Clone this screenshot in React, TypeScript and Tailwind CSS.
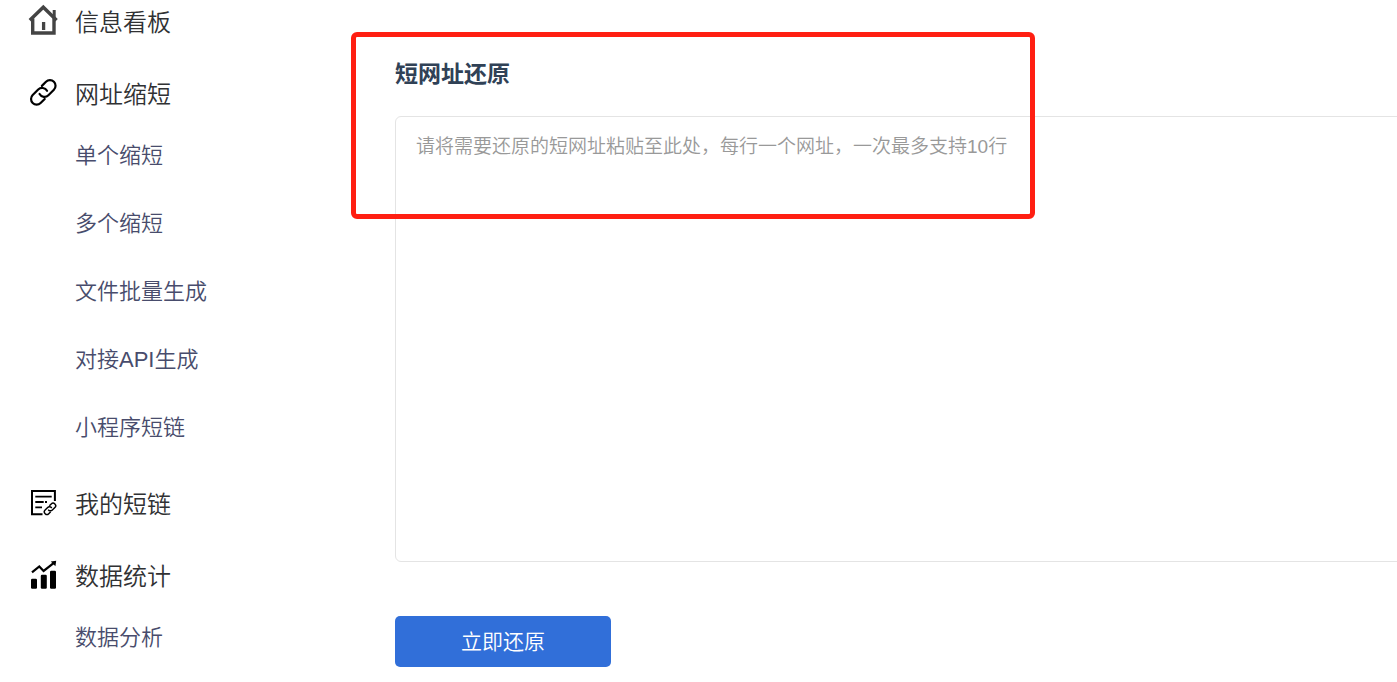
import { ReactNode } from "react";

interface NavGroup {
  title: string;
  icon: ReactNode;
  items?: string[];
}

const iconClass = "mb-1.5 h-[30px] w-[30px] shrink-0 overflow-visible";

function HomeIcon() {
  return (
    <svg viewBox="0 0 30 30" className={`${iconClass} text-[#444444]`} fill="none" stroke="currentColor" strokeWidth="3.4" aria-hidden="true">
      <path d="M1.8 15.3 15.3 2.2 28.6 15.3" />
      <path d="M4.7 13.5V28H26V13.5" />
      <path d="M26.2 5V14" strokeWidth="3" />
      <path d="M15.6 17V25" strokeWidth="3.3" />
    </svg>
  );
}

function ChainPaths() {
  return (
    <>
      <path d="M3.6 -5.6H9.4A5.6 5.6 0 0 1 9.4 5.6H1.6A5.6 5.6 0 0 1 -3.8 -1.5" />
      <path d="M-3.6 5.6H-9.4A5.6 5.6 0 0 1 -9.4 -5.6H-1.6A5.6 5.6 0 0 1 3.8 1.5" />
    </>
  );
}

function ChainIcon() {
  return (
    <svg viewBox="0 0 30 30" className={`${iconClass} text-black`} fill="none" stroke="currentColor" strokeWidth="2.2" strokeLinecap="round" aria-hidden="true">
      <g transform="translate(15.3 15.4) rotate(-45)">
        <ChainPaths />
      </g>
    </svg>
  );
}

function ListIcon() {
  return (
    <svg viewBox="0 0 30 30" className={`${iconClass} text-black`} fill="none" stroke="currentColor" strokeWidth="2" aria-hidden="true">
      <path d="M14.5 27.2H4V4H26.9V14" />
      <path d="M7.3 9.7H23.7M7.3 15H15.7M17 15H19M7.3 20.4H14" strokeWidth="1.8" />
      <g transform="translate(22 21.8) rotate(-45) scale(0.46)">
        <g strokeWidth="3.2">
          <ChainPaths />
        </g>
      </g>
    </svg>
  );
}

function ChartIcon() {
  return (
    <svg viewBox="0 0 30 30" className={`${iconClass} text-black`} fill="currentColor" aria-hidden="true">
      <rect x="3" y="19.7" width="6" height="10" rx="1.2" />
      <rect x="12.8" y="15.7" width="6" height="14" rx="1.2" />
      <rect x="22" y="11.7" width="6" height="18" rx="1.2" />
      <path d="M4 13.4 11.3 7.4 15.6 11.9 25.6 4.1" fill="none" stroke="currentColor" strokeWidth="2.2" />
      <path d="M22.8 2.4 28.2 1.8 27.4 7.2Z" />
    </svg>
  );
}

const groups: NavGroup[] = [
  { title: "信息看板", icon: <HomeIcon /> },
  {
    title: "网址缩短",
    icon: <ChainIcon />,
    items: ["单个缩短", "多个缩短", "文件批量生成", "对接API生成", "小程序短链"],
  },
  { title: "我的短链", icon: <ListIcon /> },
  { title: "数据统计", icon: <ChartIcon />, items: ["数据分析"] },
];

function Sidebar() {
  return (
    <nav className="flex w-[351px] shrink-0 flex-col gap-7 pt-px pl-7">
      {groups.map((group) => (
        <div key={group.title}>
          <a href="#" className="flex h-11 items-center gap-[17px] text-2xl text-[#303133]">
            {group.icon}
            {group.title}
          </a>
          {group.items && (
            <ul className="mt-4 flex flex-col gap-6 pb-1.5 pl-[47px]">
              {group.items.map((item) => (
                <li key={item}>
                  <a href="#" className="flex h-11 items-center text-[22px] text-[#484c6c]">
                    {item}
                  </a>
                </li>
              ))}
            </ul>
          )}
        </div>
      ))}
    </nav>
  );
}

export default function App() {
  return (
    <div className="flex min-h-screen overflow-hidden bg-white font-['Liberation_Sans','Noto_Sans_CJK_SC',sans-serif] font-[350]">
      <Sidebar />
      <main className="relative min-w-0 flex-1 pt-14 pl-11">
        <h1 className="text-[23px] leading-9 font-bold text-[#304156]">
          <label htmlFor="urls">短网址还原</label>
        </h1>
        <textarea
          id="urls"
          placeholder="请将需要还原的短网址粘贴至此处，每行一个网址，一次最多支持10行"
          className="mt-6 block h-[446px] w-[calc(100%+24px)] resize-none rounded-md border border-[#e4e4e4] px-5 py-4 text-[19px] leading-7 outline-none placeholder:text-[#999999]"
        />
        <button type="button" className="mt-[54px] h-[51px] w-[216px] rounded-[5px] bg-[#316fd9] text-[21px] text-white">
          立即还原
        </button>
        <div className="pointer-events-none absolute top-8 left-0 h-[187px] w-[684px] rounded-md border-5 border-[#ff1f12]" />
      </main>
    </div>
  );
}
